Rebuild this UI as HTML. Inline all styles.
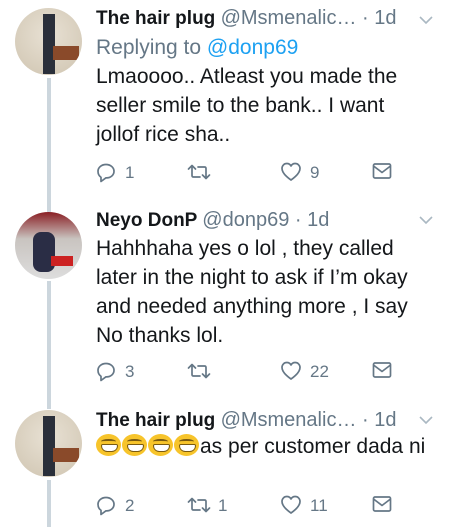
<!DOCTYPE html>
<html><head><meta charset="utf-8"><style>
body{margin:0;width:450px;height:527px;background:#fff;position:relative;overflow:hidden;font-family:"Liberation Sans",sans-serif;color:#14171a}
.a{position:absolute;white-space:nowrap}
.av{position:absolute;left:15px;width:67px;height:67px;border-radius:50%;overflow:hidden}
.line{position:absolute;left:47px;width:4px;background:#ccd6dd}
.nm{font-size:19px;font-weight:bold}
.h{color:#657786;font-weight:normal;font-size:20px}
.tx{font-size:21px;line-height:29px}
.n{font-size:17px;color:#657786}
.emo{display:inline-block;width:25px;height:22px;border-radius:50%;background:#f7c42b;vertical-align:-3px;margin-right:1px;position:relative}
.emo:after{content:"";position:absolute;left:5px;top:10px;width:15px;height:6px;background:#fff;border:1px solid #7a5a10;border-radius:2px 2px 7px 7px}
.emo:before{content:"";position:absolute;left:5px;top:5px;width:15px;height:3px;border-top:2px solid #7a5a10;border-radius:50%}
</style></head><body>
<div class="line" style="top:78px;height:134px"></div>
<div class="line" style="top:281px;height:128px"></div>
<div class="line" style="top:480px;height:47px"></div>

<div class="av" style="top:8px;background:radial-gradient(circle at 50% 40%,#e8e1d4,#cfc4b0)"><div style="position:absolute;left:28px;top:6px;width:12px;height:60px;background:#2a2f3a"></div><div style="position:absolute;left:38px;top:38px;width:26px;height:14px;background:#8a4a2a"></div></div>
<div class="av" style="top:212px;background:linear-gradient(#8a1f24,#c9c4c0 40%,#ddd)"><div style="position:absolute;left:18px;top:20px;width:22px;height:40px;background:#2a2d45;border-radius:8px"></div><div style="position:absolute;left:36px;top:44px;width:22px;height:10px;background:#c22"></div></div>
<div class="av" style="top:410px;background:radial-gradient(circle at 50% 40%,#e8e1d4,#cfc4b0)"><div style="position:absolute;left:28px;top:6px;width:12px;height:60px;background:#2a2f3a"></div><div style="position:absolute;left:38px;top:38px;width:26px;height:14px;background:#8a4a2a"></div></div>

<svg class="a" style="left:418px;top:14px" width="16" height="12"><path d="M2 3l6 6 6-6" fill="none" stroke="#aab8c2" stroke-width="1.6"/></svg>
<svg class="a" style="left:418px;top:214px" width="16" height="12"><path d="M2 3l6 6 6-6" fill="none" stroke="#aab8c2" stroke-width="1.6"/></svg>
<svg class="a" style="left:418px;top:414px" width="16" height="12"><path d="M2 3l6 6 6-6" fill="none" stroke="#aab8c2" stroke-width="1.6"/></svg>

<div class="a nm" style="left:96px;top:7px">The hair plug <span class="h">@Msmenalic… · 1d</span></div>
<div class="a tx" style="left:96px;top:33px;color:#657786">Replying to <span style="color:#1da1f2">@donp69</span></div>
<div class="a tx" style="left:96px;top:62px">Lmaoooo.. Atleast you made the<br>seller smile to the bank.. I want<br>jollof rice sha..</div>

<div class="a nm" style="left:96px;top:209px">Neyo DonP <span class="h">@donp69 · 1d</span></div>
<div class="a tx" style="left:96px;top:234px">Hahhhaha yes o lol , they called<br>later in the night to ask if I’m okay<br>and needed anything more , I say<br>No thanks lol.</div>

<div class="a nm" style="left:96px;top:409px">The hair plug <span class="h">@Msmenalic… · 1d</span></div>
<div class="a tx" style="left:96px;top:432px"><span class="emo"></span><span class="emo"></span><span class="emo"></span><span class="emo"></span>as per customer dada ni</div>

<svg width="0" height="0" style="position:absolute"><defs>
<g id="rp"><path d="M10 2.5c4.6 0 8 3 8 6.8s-3.3 6.6-7.4 6.6H9.8L5 19.5v-4.2C3 14 2 11.8 2 9.3 2 5.5 5.4 2.5 10 2.5z" fill="none" stroke="#657786" stroke-width="1.7" stroke-linejoin="round"/></g>
<g id="rt" fill="none" stroke="#657786" stroke-width="1.7" stroke-linecap="round" stroke-linejoin="round"><path d="M1.5 7l3.5-3.5L8.5 7M5 4v9.5c0 1 .7 1.5 1.5 1.5H13"/><path d="M22.5 13l-3.5 3.5L15.5 13M19 16V6.5c0-1-.7-1.5-1.5-1.5H11"/></g>
<g id="hr"><path d="M11 19S2 13.3 2 7.5C2 4.6 4.2 2.5 6.8 2.5c1.9 0 3.4 1 4.2 2.5.8-1.5 2.3-2.5 4.2-2.5C17.8 2.5 20 4.6 20 7.5 20 13.3 11 19 11 19z" fill="none" stroke="#657786" stroke-width="1.7" stroke-linejoin="round"/></g>
<g id="ml" fill="none" stroke="#657786" stroke-width="1.7" stroke-linejoin="round"><rect x="1.5" y="3" width="17" height="14" rx="1.5"/><path d="M1.5 5l8.5 6.5L18.5 5"/></g>
</defs></svg>

<svg class="a" style="left:96px;top:162px" width="21" height="21"><use href="#rp"/></svg><div class="a n" style="left:125px;top:163px">1</div>
<svg class="a" style="left:187px;top:162px" width="24" height="20"><use href="#rt"/></svg>
<svg class="a" style="left:280px;top:161px" width="22" height="21"><use href="#hr"/></svg><div class="a n" style="left:310px;top:163px">9</div>
<svg class="a" style="left:372px;top:161px" width="20" height="20"><use href="#ml"/></svg>

<svg class="a" style="left:96px;top:361px" width="21" height="21"><use href="#rp"/></svg><div class="a n" style="left:125px;top:362px">3</div>
<svg class="a" style="left:187px;top:361px" width="24" height="20"><use href="#rt"/></svg>
<svg class="a" style="left:280px;top:360px" width="22" height="21"><use href="#hr"/></svg><div class="a n" style="left:310px;top:362px">22</div>
<svg class="a" style="left:372px;top:360px" width="20" height="20"><use href="#ml"/></svg>

<svg class="a" style="left:96px;top:495px" width="21" height="21"><use href="#rp"/></svg><div class="a n" style="left:125px;top:496px">2</div>
<svg class="a" style="left:187px;top:495px" width="24" height="20"><use href="#rt"/></svg><div class="a n" style="left:218px;top:496px">1</div>
<svg class="a" style="left:280px;top:494px" width="22" height="21"><use href="#hr"/></svg><div class="a n" style="left:310px;top:496px">11</div>
<svg class="a" style="left:372px;top:494px" width="20" height="20"><use href="#ml"/></svg>
</body></html>
